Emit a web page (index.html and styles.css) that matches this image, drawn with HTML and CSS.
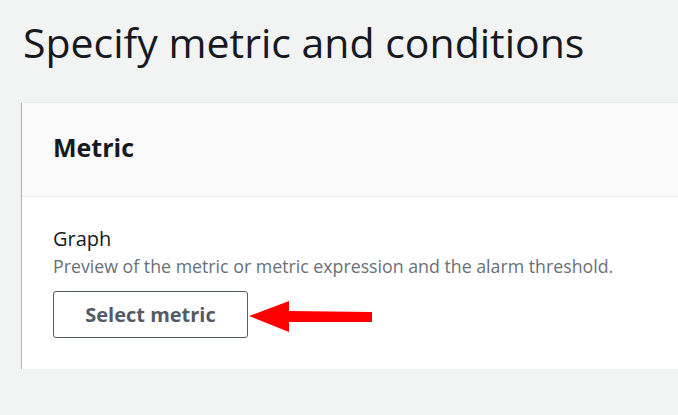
FILE: index.html
```html
<!DOCTYPE html>
<html lang="en">
<head>
<meta charset="utf-8">
<title>Specify metric and conditions</title>
<link rel="stylesheet" href="styles.css">
</head>
<body>
<main class="page">
  <h1 class="page-title">Specify metric and conditions</h1>
  <section class="card">
    <header class="card-header">
      <h2 class="card-title">Metric</h2>
    </header>
    <div class="card-body">
      <div class="field-label">Graph</div>
      <div class="field-desc">Preview of the metric or metric expression and the alarm threshold.</div>
      <div class="action-row">
        <button class="btn" type="button">Select metric</button>
        <svg class="callout-arrow" width="124" height="32" viewBox="0 0 124 32" aria-hidden="true">
          <polygon points="0,15 40,0 40,10 123,11 123,21 40,21 40,31" fill="#ff0000"/>
        </svg>
      </div>
    </div>
  </section>
</main>
</body>
</html>
```

FILE: styles.css
```css
html, body {
  margin: 0;
  padding: 0;
  overflow: hidden;
}
body {
  background: #f2f3f3;
  font-family: "Open Sans", "Noto Sans", sans-serif;
  color: #16191f;
}
.page {
  padding: 18px 0 0 22px;
}
.page-title {
  margin: 0 0 36px 1px;
  font-size: 41px;
  line-height: 48px;
  font-weight: 400;
  color: #16191f;
}
.card {
  background: #ffffff;
  border-top: 1px solid #eaeded;
  box-shadow: 0 1px 1px 0 rgba(0, 28, 36, 0.5), 1px 1px 1px 0 rgba(0, 28, 36, 0.15), -1px 1px 1px 0 rgba(0, 28, 36, 0.2);
}
.card-header {
  background: #fafafa;
  border-bottom: 1px solid #eaeded;
  padding: 29px 31px 34px;
}
.card-title {
  margin: 0;
  font-size: 25px;
  line-height: 30px;
  font-weight: 700;
  color: #16191f;
}
.card-body {
  padding: 28px 31px 31px;
}
.field-label {
  font-size: 20px;
  line-height: 28px;
  color: #16191f;
}
.field-desc {
  font-size: 17.75px;
  line-height: 26px;
  color: #687078;
}
.action-row {
  position: relative;
  margin-top: 12px;
}
.btn {
  display: block;
  box-sizing: border-box;
  width: 195px;
  height: 47px;
  padding: 0;
  background: #ffffff;
  border: 1px solid #545b64;
  border-radius: 3px;
  font-family: "Open Sans", "Noto Sans", sans-serif;
  font-size: 20px;
  font-weight: 700;
  color: #545b64;
}
.callout-arrow {
  position: absolute;
  left: 196px;
  top: 10px;
}
```
